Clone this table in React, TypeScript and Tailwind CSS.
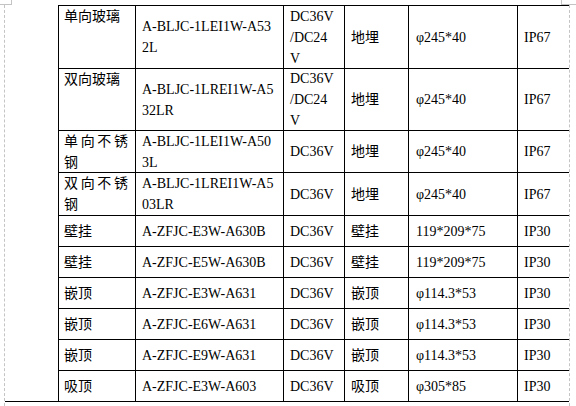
import React from "react";

type Row = {
  name: string;
  model: string;
  volt: string[];
  mount: string;
  size: string;
  ip: string;
  top?: boolean;
};

const rows: Row[] = [
  { name: "单向玻璃", model: "A-BLJC-1LEI1W-A532L", volt: ["DC36V", "/DC24", "V"], mount: "地埋", size: "φ245*40", ip: "IP67", top: true },
  { name: "双向玻璃", model: "A-BLJC-1LREI1W-A532LR", volt: ["DC36V", "/DC24", "V"], mount: "地埋", size: "φ245*40", ip: "IP67", top: true },
  { name: "单向不锈钢", model: "A-BLJC-1LEI1W-A503L", volt: ["DC36V"], mount: "地埋", size: "φ245*40", ip: "IP67" },
  { name: "双向不锈钢", model: "A-BLJC-1LREI1W-A503LR", volt: ["DC36V"], mount: "地埋", size: "φ245*40", ip: "IP67" },
  { name: "壁挂", model: "A-ZFJC-E3W-A630B", volt: ["DC36V"], mount: "壁挂", size: "119*209*75", ip: "IP30" },
  { name: "壁挂", model: "A-ZFJC-E5W-A630B", volt: ["DC36V"], mount: "壁挂", size: "119*209*75", ip: "IP30" },
  { name: "嵌顶", model: "A-ZFJC-E3W-A631", volt: ["DC36V"], mount: "嵌顶", size: "φ114.3*53", ip: "IP30" },
  { name: "嵌顶", model: "A-ZFJC-E6W-A631", volt: ["DC36V"], mount: "嵌顶", size: "φ114.3*53", ip: "IP30" },
  { name: "嵌顶", model: "A-ZFJC-E9W-A631", volt: ["DC36V"], mount: "嵌顶", size: "φ114.3*53", ip: "IP30" },
  { name: "吸顶", model: "A-ZFJC-E3W-A603", volt: ["DC36V"], mount: "吸顶", size: "φ305*85", ip: "IP30" },
];

export default function App() {
  return (
    <div
      className="relative w-[576px] h-[406px] bg-white overflow-hidden text-black text-[14px] leading-[21px]"
      style={{ fontFamily: '"Liberation Serif", "Noto Sans CJK SC", serif' }}
    >
      {/* page corner marks */}
      <div className="absolute left-0 top-[4px] w-[12px] h-px bg-[#c4c4c4]" />
      <div className="absolute left-[11px] top-0 w-px h-[5px] bg-[#c4c4c4]" />
      <div className="absolute left-[561px] top-0 w-px h-[5px] bg-[#c4c4c4]" />
      <div className="absolute left-[561px] top-[4px] w-[15px] h-px bg-[#c4c4c4]" />

      <div className="ml-[4px] mt-[5px] w-[566px] min-h-[401px] border-l border-r border-dashed border-[#c4c4c4]">
        <div className="grid grid-cols-[54px_77px_148px_61px_64px_109px_51px] grid-rows-[64px_62px_42px_43px_31px_31px_31px_31px_31px_31px]">
          <div className="col-start-1 row-start-1 row-span-10 border-r border-b border-black" />
          {rows.map((r, i) => {
            const t = i === 0 ? " border-t" : "";
            return (
              <React.Fragment key={i}>
                <div
                  className={
                    "col-start-2 flex border-r border-b border-black pl-[5px] pr-[7px]" +
                    t +
                    (r.top ? " items-start" : " items-center")
                  }
                  style={{ gridRowStart: i + 1 }}
                >
                  <div className="w-full text-justify break-all">{r.name}</div>
                </div>
                <div
                  className={"col-start-3 flex items-center border-r border-b border-black pl-[6px] pr-[7px]" + t}
                  style={{ gridRowStart: i + 1 }}
                >
                  <div className="w-full break-all">{r.model}</div>
                </div>
                <div
                  className={"col-start-4 flex items-center border-r border-b border-black pl-[6px]" + t}
                  style={{ gridRowStart: i + 1 }}
                >
                  <div className="flex flex-col">
                    {r.volt.map((v, j) => (
                      <span key={j}>{v}</span>
                    ))}
                  </div>
                </div>
                <div
                  className={"col-start-5 flex items-center border-r border-b border-black pl-[6px]" + t}
                  style={{ gridRowStart: i + 1 }}
                >
                  {r.mount}
                </div>
                <div
                  className={"col-start-6 flex items-center border-r border-b border-black pl-[7px]" + t}
                  style={{ gridRowStart: i + 1 }}
                >
                  {r.size}
                </div>
                <div
                  className={"col-start-7 flex items-center border-b border-black pl-[6px]" + t}
                  style={{ gridRowStart: i + 1 }}
                >
                  {r.ip}
                </div>
              </React.Fragment>
            );
          })}
        </div>
      </div>
    </div>
  );
}
